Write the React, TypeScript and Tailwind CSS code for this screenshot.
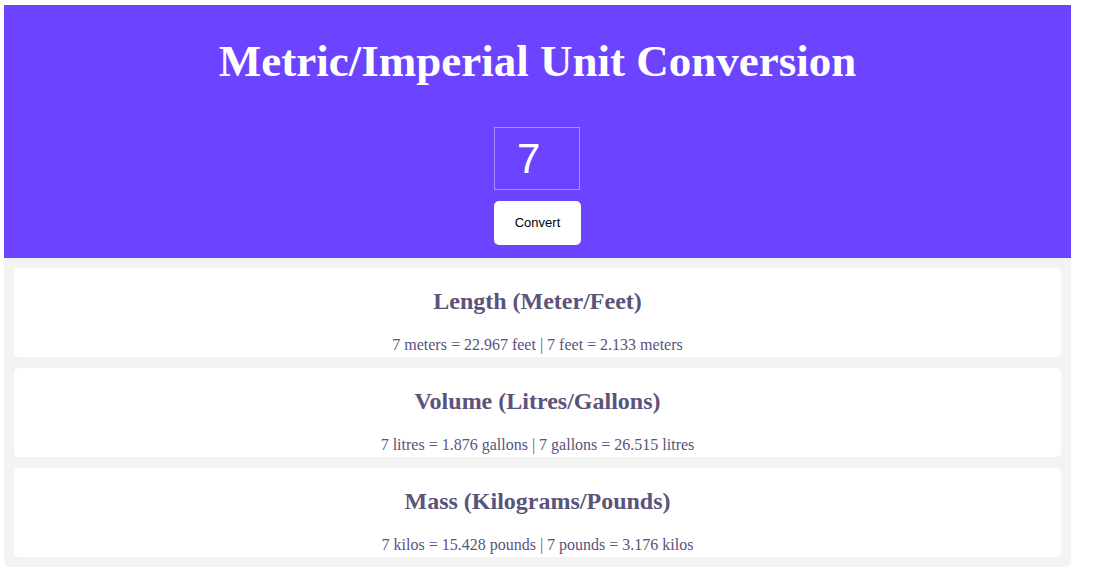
import React from "react";

const rows = [
  { title: "Length (Meter/Feet)", text: "7 meters = 22.967 feet | 7 feet = 2.133 meters" },
  { title: "Volume (Litres/Gallons)", text: "7 litres = 1.876 gallons | 7 gallons = 26.515 litres" },
  { title: "Mass (Kilograms/Pounds)", text: "7 kilos = 15.428 pounds | 7 pounds = 3.176 kilos" },
];

export default function App() {
  return (
    <div className="min-h-[577px] bg-white pt-[5px] pl-[4px]" style={{ fontFamily: '"Liberation Serif", serif' }}>
      <div className="w-[1067px]">
        <div className="bg-[#6c43ff] h-[253px] flex flex-col items-center">
          <h1 className="text-white font-bold text-[45px] leading-none mt-[34px]">Metric/Imperial Unit Conversion</h1>
          <div className="mt-[43px] mr-[1px] w-[86px] h-[63px] border border-[#a98fff] flex items-center pl-[22px] text-white text-[42px]" style={{ fontFamily: '"Liberation Sans", sans-serif' }}>
            7
          </div>
          <button className="mt-[11px] w-[87px] h-[44px] bg-white rounded-[5px] text-black text-[13px]" style={{ fontFamily: '"Liberation Sans", sans-serif' }}>
            Convert
          </button>
        </div>
        <div className="bg-[#f3f3f3] rounded-b-[5px] p-[10px] flex flex-col gap-[11px]">
          {rows.map((r) => (
            <div key={r.title} className="bg-white rounded-[5px] h-[89px] flex flex-col items-center text-[#5a537b]">
              <h2 className="font-bold text-[24px] leading-none mt-[21px]">{r.title}</h2>
              <p className="text-[16px] leading-none mt-[24px]">{r.text}</p>
            </div>
          ))}
        </div>
      </div>
    </div>
  );
}
